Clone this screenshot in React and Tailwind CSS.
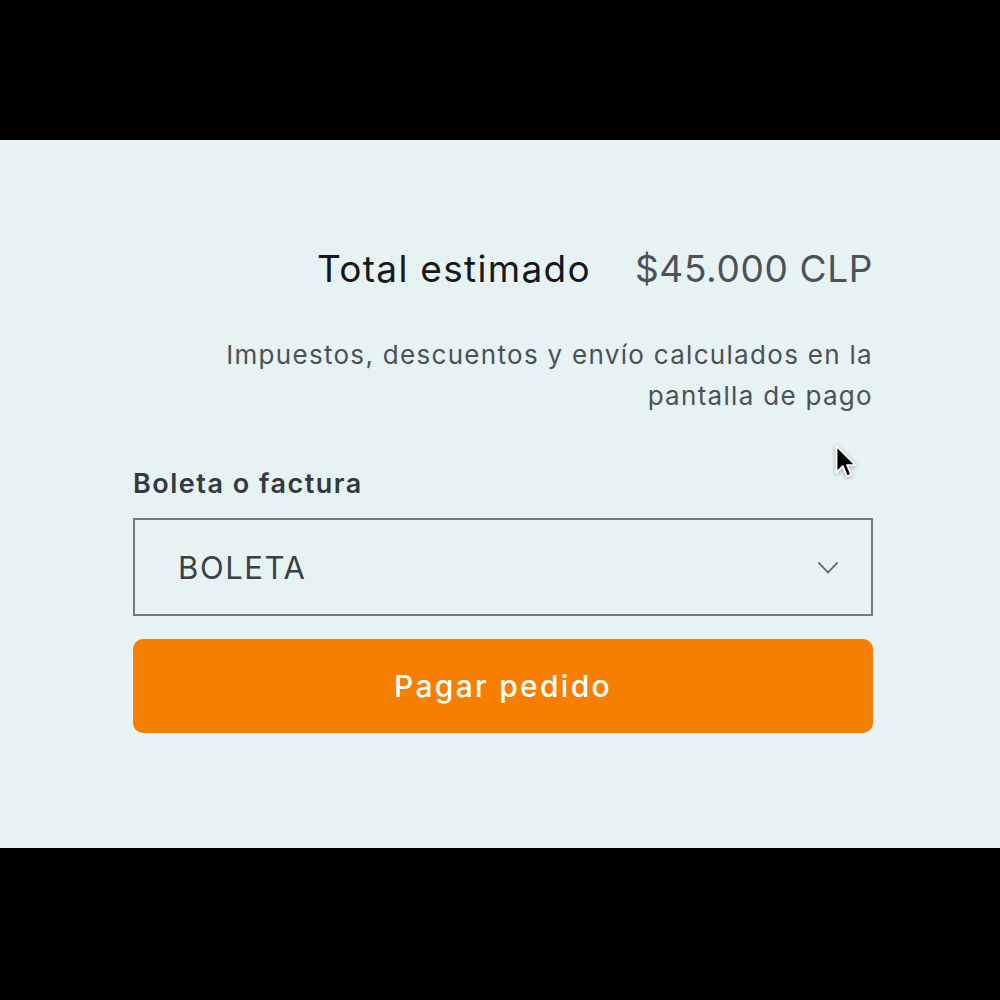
export default function App() {
  return (
    <div className="w-[1000px] h-[1000px] bg-black flex flex-col" style={{ fontFamily: "Inter, 'Noto Sans', sans-serif" }}>
      <div className="h-[140px]" />
      <div className="relative h-[708px] bg-[#e7f2f3]">
        <div className="ml-[133px] w-[740px] flex flex-col pt-[106px]">
          <div className="flex justify-end items-center gap-[44px] h-[46px] text-[37px]">
            <span className="text-[#15191c] tracking-[1.3px]">Total estimado</span>
            <span className="text-[#4b5358] tracking-[0.65px]">$45.000 CLP</span>
          </div>
          <p className="mt-[42px] text-right text-[26px] leading-[41px] tracking-[1.3px] text-[#4a5257]">
            Impuestos, descuentos y envío calculados en la
            <br />
            pantalla de pago
          </p>
          <label className="mt-[51px] text-[27px] font-semibold text-[#33393d] leading-[34px] tracking-[1.5px]">
            Boleta o factura
          </label>
          <div className="mt-[17px] h-[98px] border-2 border-[#737a7e] flex items-center justify-between pl-[43px] pr-[33px]">
            <span className="text-[31px] text-[#3a4145] tracking-[1.6px] pt-[3px]">BOLETA</span>
            <svg width="20" height="12" viewBox="0 0 20 12" className="mt-[1px]">
              <polyline points="1,1 10,10.5 19,1" fill="none" stroke="#596165" strokeWidth="1.8" strokeLinecap="round" strokeLinejoin="round" />
            </svg>
          </div>
          <button className="mt-[23px] h-[94px] rounded-[10px] bg-[#f77f00] text-white text-[30px] font-medium tracking-[2.3px]">
            Pagar pedido
          </button>
        </div>
        <svg className="absolute left-[833px] top-[304px]" width="26" height="38" viewBox="0 0 24 36" style={{ filter: "drop-shadow(0 1px 2px rgba(0,0,0,0.3))" }}>
          <path d="M3 2 L3 27 L9 21 L13 31 L17 29 L13 20 L21 20 Z" fill="#000" stroke="#fff" strokeWidth="1.8" strokeLinejoin="round" />
        </svg>
      </div>
      <div className="flex-1" />
    </div>
  );
}
